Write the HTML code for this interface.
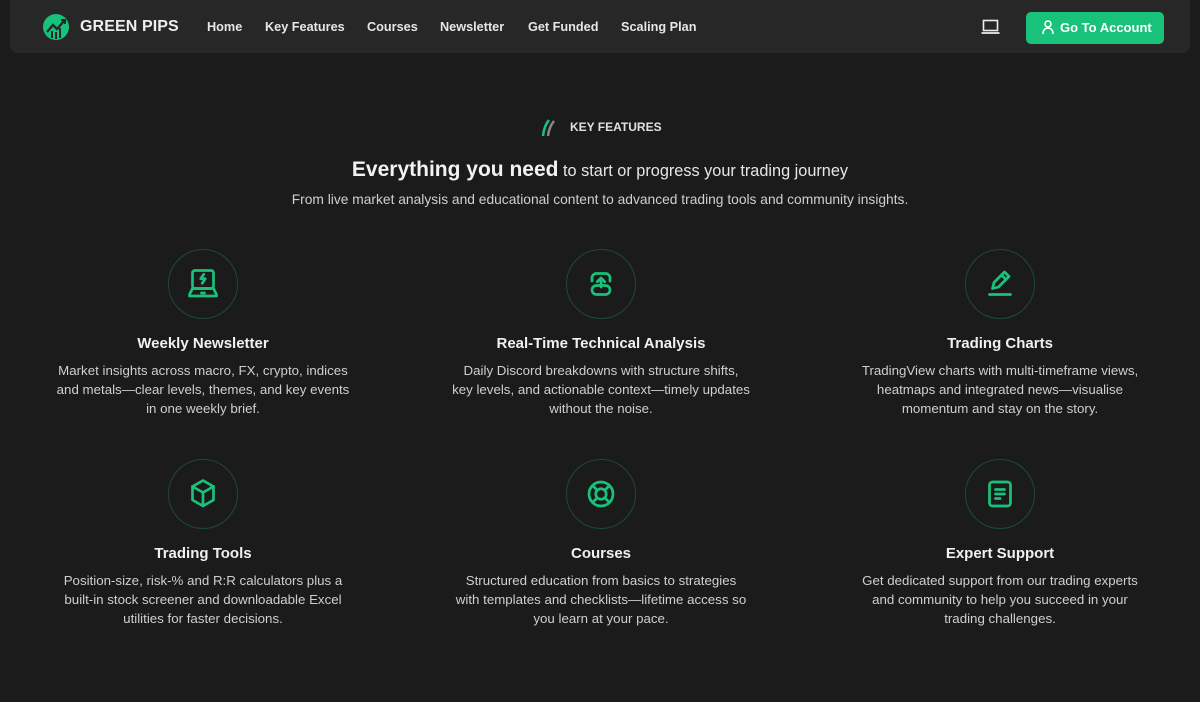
<!DOCTYPE html>
<html><head><meta charset="utf-8"><style>
*{margin:0;padding:0;box-sizing:border-box}
body{width:1200px;height:702px;background:#1b1b1b;font-family:"Liberation Sans",sans-serif;color:#e8e8e8;position:relative;overflow:hidden}
.nav{position:absolute;left:10px;top:0;width:1180px;height:53px;background:#272727;border-radius:0 0 8px 8px}
.logo{position:absolute;left:42px;top:13px}
.brand{position:absolute;left:80px;top:18px;font-size:16px;font-weight:bold;color:#eee;letter-spacing:.1px}
.link{position:absolute;top:20px;font-size:12.7px;font-weight:bold;color:#e6e6e6}
.btn{position:absolute;left:1026px;top:12px;width:138px;height:32px;background:#19c27b;border-radius:5px;color:#fff;font-size:13px;font-weight:bold;line-height:32px;padding-left:34px}
.kf{position:absolute;left:570px;top:120px;font-size:12px;font-weight:bold;color:#e0e0e0}
h1{position:absolute;left:0;width:1200px;top:158px;text-align:center;font-size:16.3px;font-weight:normal;color:#e6e6e6}
h1 b{font-size:21px;color:#f2f2f2}
.sub{position:absolute;left:0;width:1200px;top:192px;text-align:center;font-size:13.8px;color:#cfcfcf}
.card{position:absolute;width:360px;text-align:center}
.circ{width:70px;height:70px;border:1.5px solid #1d4a37;border-radius:50%;margin:0 auto;display:flex;align-items:center;justify-content:center}
.card h3{font-size:15px;font-weight:bold;color:#f0f0f0;margin-top:16px}
.card p{font-size:13.3px;line-height:19px;color:#cfcfcf;margin-top:9px}
</style></head><body>
<div class="nav"></div>
<svg class="logo" width="28" height="28" viewBox="0 0 28 28"><circle cx="14" cy="14" r="13" fill="#19c27b"/><path d="M5 19 L11 12 L15 16 L22 8" stroke="#272727" stroke-width="2.4" fill="none"/><path d="M19 7h4v4" stroke="#272727" stroke-width="2" fill="none"/><rect x="9" y="18" width="2" height="7" fill="#272727"/><rect x="13" y="19" width="2" height="7" fill="#272727"/><rect x="17" y="15" width="2" height="10" fill="#272727"/></svg>
<div class="brand">GREEN PIPS</div>
<div class="link" style="left:207px">Home</div>
<div class="link" style="left:265px">Key Features</div>
<div class="link" style="left:367px">Courses</div>
<div class="link" style="left:440px">Newsletter</div>
<div class="link" style="left:528px">Get Funded</div>
<div class="link" style="left:621px">Scaling Plan</div>
<svg style="position:absolute;left:981px;top:19px" width="19" height="16" viewBox="0 0 19 16"><rect x="2.5" y="1.5" width="14" height="10" fill="none" stroke="#eee" stroke-width="1.6"/><path d="M0.5 14h18" stroke="#eee" stroke-width="1.8"/></svg>
<div class="btn">Go To Account</div>
<svg style="position:absolute;left:1042px;top:20px" width="12" height="15" viewBox="0 0 12 15"><circle cx="6" cy="4" r="3" fill="none" stroke="#fff" stroke-width="1.5"/><path d="M1 14c0-4 2-6 5-6s5 2 5 6" fill="none" stroke="#fff" stroke-width="1.5"/></svg>
<svg style="position:absolute;left:541px;top:118px" width="16" height="20" viewBox="0 0 16 20"><path d="M2 18 Q3 8 8 2" stroke="#19c27b" stroke-width="2.5" fill="none"/><path d="M7 18 Q8 9 13 3" stroke="#888" stroke-width="2.5" fill="none"/></svg>
<div class="kf">KEY FEATURES</div>
<h1><b>Everything you need</b> to start or progress your trading journey</h1>
<div class="sub">From live market analysis and educational content to advanced trading tools and community insights.</div>

<div class="card" style="left:23px;top:249px"><div class="circ"><svg width="36" height="36" viewBox="0 0 24 24" fill="none" stroke="#19c27b" stroke-width="1.8" stroke-linecap="round" stroke-linejoin="round"><rect x="5" y="3" width="14" height="12" rx="1.5"/><path d="M3 19l2-4h14l2 4v1H3z"/><path d="M11 18h2"/><path d="M12.5 5.5l-2 3h3l-2 3"/></svg></div><h3>Weekly Newsletter</h3><p>Market insights across macro, FX, crypto, indices<br>and metals—clear levels, themes, and key events<br>in one weekly brief.</p></div>

<div class="card" style="left:421px;top:249px"><div class="circ"><svg width="36" height="36" viewBox="0 0 24 24" fill="none" stroke="#19c27b" stroke-width="1.8" stroke-linecap="round" stroke-linejoin="round"><path d="M6 10V8a3 3 0 0 1 3-3h6a3 3 0 0 1 3 3v2"/><rect x="6" y="13" width="12" height="6" rx="3"/><path d="M12 14V8M9.5 10.5L12 8l2.5 2.5"/></svg></div><h3>Real-Time Technical Analysis</h3><p>Daily Discord breakdowns with structure shifts,<br>key levels, and actionable context—timely updates<br>without the noise.</p></div>

<div class="card" style="left:820px;top:249px"><div class="circ"><svg width="36" height="36" viewBox="0 0 24 24" fill="none" stroke="#19c27b" stroke-width="1.8" stroke-linecap="round" stroke-linejoin="round"><path d="M5 19h14"/><path d="M7 15l1-4 7-7 3 3-7 7z"/><path d="M13 6l3 3"/></svg></div><h3>Trading Charts</h3><p>TradingView charts with multi-timeframe views,<br>heatmaps and integrated news—visualise<br>momentum and stay on the story.</p></div>

<div class="card" style="left:23px;top:459px"><div class="circ"><svg width="36" height="36" viewBox="0 0 24 24" fill="none" stroke="#19c27b" stroke-width="1.8" stroke-linecap="round" stroke-linejoin="round"><path d="M12 3l7 4v9l-7 4-7-4V7z"/><path d="M5 7l7 4 7-4M12 11v9"/></svg></div><h3>Trading Tools</h3><p>Position-size, risk-% and R:R calculators plus a<br>built-in stock screener and downloadable Excel<br>utilities for faster decisions.</p></div>

<div class="card" style="left:421px;top:459px"><div class="circ"><svg width="36" height="36" viewBox="0 0 24 24" fill="none" stroke="#19c27b" stroke-width="1.8" stroke-linecap="round" stroke-linejoin="round"><circle cx="12" cy="12" r="8"/><circle cx="12" cy="12" r="3.5"/><path d="M6.5 6.5l3 3M17.5 6.5l-3 3M6.5 17.5l3-3M17.5 17.5l-3-3"/></svg></div><h3>Courses</h3><p>Structured education from basics to strategies<br>with templates and checklists—lifetime access so<br>you learn at your pace.</p></div>

<div class="card" style="left:820px;top:459px"><div class="circ"><svg width="36" height="36" viewBox="0 0 24 24" fill="none" stroke="#19c27b" stroke-width="1.8" stroke-linecap="round" stroke-linejoin="round"><rect x="5" y="4" width="14" height="16" rx="2"/><path d="M9 9h6M9 12h6M9 15h3"/></svg></div><h3>Expert Support</h3><p>Get dedicated support from our trading experts<br>and community to help you succeed in your<br>trading challenges.</p></div>
</body></html>
